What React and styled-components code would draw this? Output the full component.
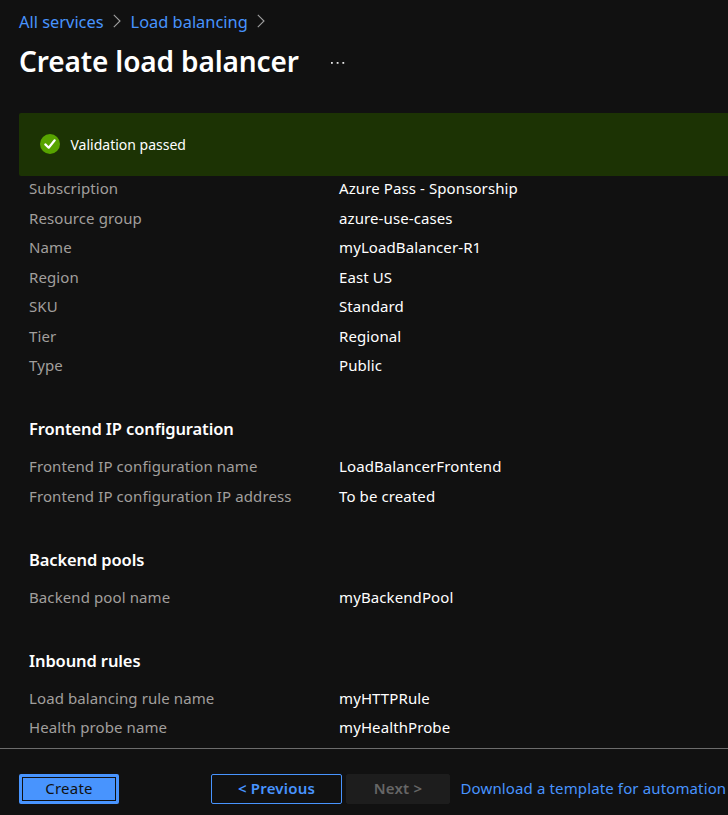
import React from "react";
import styled, { createGlobalStyle } from "styled-components";

const GlobalStyle = createGlobalStyle`
  *, *::before, *::after { box-sizing: border-box; }
  body { margin: 0; background: #111111; overflow: hidden; }
`;

const Page = styled.div`
  display: flex;
  flex-direction: column;
  height: 815px;
  background: #111111;
  color: #ffffff;
  font-family: "Noto Sans", "Open Sans", sans-serif;
  font-size: 15px;
  letter-spacing: 0.1px;
  overflow: hidden;
  white-space: nowrap;
`;

const Header = styled.header`
  flex: none;
  height: 113px;
  padding: 9px 0 0 19px;
`;

const Breadcrumbs = styled.nav`
  display: flex;
  align-items: center;
  height: 24px;
  font-size: 16.4px;
  letter-spacing: 0;
`;

const Crumb = styled.a`
  color: #4894fe;
  text-decoration: none;
`;

const Chevron = styled.svg`
  flex: none;
  width: 8px;
  height: 14px;
  margin: 0 9.5px;
  fill: none;
  stroke: #a0a0a0;
  stroke-width: 1.1;
`;

const TitleRow = styled.div`
  display: flex;
  align-items: center;
  height: 40px;
  margin-top: 8px;
`;

const Title = styled.h1`
  margin: 0;
  width: 312px;
  font-size: 28px;
  line-height: 40px;
  font-weight: 600;
  letter-spacing: -0.13px;
`;

const Dots = styled.svg`
  width: 14px;
  height: 4px;
  margin-top: 4px;
  fill: #e4e4e4;
`;

const Banner = styled.div`
  flex: none;
  display: flex;
  align-items: center;
  gap: 10.5px;
  height: 63px;
  margin-left: 19px;
  padding-left: 21px;
  border-radius: 2px 0 0 2px;
  background: #1c3304;
  font-size: 14px;
  letter-spacing: 0;
`;

const CheckIcon = styled.svg`
  flex: none;
  width: 20px;
  height: 20px;
  margin-top: -1px;
`;

const Content = styled.main`
  flex: 1;
  min-height: 0;
  margin-top: -2px;
  padding-left: 29px;
  overflow: hidden;
`;

const SectionTitle = styled.h2`
  margin: 0;
  padding: 36.5px 0 11px;
  font-size: 16.5px;
  line-height: 24px;
  font-weight: 600;
  letter-spacing: -0.12px;
`;

const Details = styled.dl`
  display: grid;
  grid-template-columns: 310px 1fr;
  grid-auto-rows: 29.5px;
  margin: 0;
  line-height: 29.5px;
`;

const Label = styled.dt`
  color: #a19f9d;
`;

const Value = styled.dd`
  margin: 0;
  color: #ffffff;
`;

const Footer = styled.footer`
  flex: none;
  display: flex;
  align-items: flex-start;
  height: 67px;
  padding: 25px 0 0 19px;
  border-top: 1px solid #6c6c6c;
`;

const Button = styled.button`
  flex: none;
  width: ${(p) => p.$width}px;
  height: 30px;
  padding: 0 0 2px;
  border: 1px solid #4894fe;
  border-radius: 2px;
  background: transparent;
  color: #4894fe;
  font: 600 15px/26px "Noto Sans", "Open Sans", sans-serif;
  letter-spacing: 0.2px;
`;

const PrimaryButton = styled(Button)`
  margin-right: 92px;
  border-width: 2px;
  background: #4894fe;
  color: #111111;
  font-weight: 400;
  line-height: 24px;
  outline: 1px solid #111111;
  outline-offset: -4px;
`;

const DisabledButton = styled(Button)`
  margin: 0 10.5px 0 4px;
  border-color: #1d1d1d;
  background: #1d1d1d;
  color: #666666;
`;

const TemplateLink = styled.a`
  color: #4894fe;
  line-height: 29px;
  letter-spacing: 0.13px;
`;

const sections = [
  {
    rows: [
      ["Subscription", "Azure Pass - Sponsorship"],
      ["Resource group", "azure-use-cases"],
      ["Name", "myLoadBalancer-R1"],
      ["Region", "East US"],
      ["SKU", "Standard"],
      ["Tier", "Regional"],
      ["Type", "Public"],
    ],
  },
  {
    title: "Frontend IP configuration",
    rows: [
      ["Frontend IP configuration name", "LoadBalancerFrontend"],
      ["Frontend IP configuration IP address", "To be created"],
    ],
  },
  { title: "Backend pools", rows: [["Backend pool name", "myBackendPool"]] },
  {
    title: "Inbound rules",
    rows: [
      ["Load balancing rule name", "myHTTPRule"],
      ["Health probe name", "myHealthProbe"],
    ],
  },
];

function Separator() {
  return (
    <Chevron viewBox="0 0 8 14">
      <path d="M.8.8 7 7 .8 13.2" />
    </Chevron>
  );
}

export default function App() {
  return (
    <Page>
      <GlobalStyle />
      <Header>
        <Breadcrumbs>
          <Crumb>All services</Crumb>
          <Separator />
          <Crumb>Load balancing</Crumb>
          <Separator />
        </Breadcrumbs>
        <TitleRow>
          <Title>Create load balancer</Title>
          <Dots viewBox="0 0 14 4">
            <rect x="0" y="1" width="1.8" height="1.8" />
            <rect x="5.7" y="1" width="1.8" height="1.8" />
            <rect x="11.4" y="1" width="1.8" height="1.8" />
          </Dots>
        </TitleRow>
      </Header>
      <Banner>
        <CheckIcon viewBox="0 0 20 20">
          <circle cx="10" cy="10" r="10" fill="#57a300" />
          <path
            d="m5.3 10.4 3.4 3.3 6-7.4"
            fill="none"
            stroke="#fff"
            strokeWidth="2.2"
            strokeLinecap="round"
            strokeLinejoin="round"
          />
        </CheckIcon>
        Validation passed
      </Banner>
      <Content>
        {sections.map((section, i) => (
          <section key={i}>
            {section.title && <SectionTitle>{section.title}</SectionTitle>}
            <Details>
              {section.rows.map(([label, value]) => (
                <React.Fragment key={label}>
                  <Label>{label}</Label>
                  <Value>{value}</Value>
                </React.Fragment>
              ))}
            </Details>
          </section>
        ))}
      </Content>
      <Footer>
        <PrimaryButton $width={100}>Create</PrimaryButton>
        <Button $width={131}>&lt; Previous</Button>
        <DisabledButton $width={104} disabled>Next &gt;</DisabledButton>
        <TemplateLink>Download a template for automation</TemplateLink>
      </Footer>
    </Page>
  );
}
